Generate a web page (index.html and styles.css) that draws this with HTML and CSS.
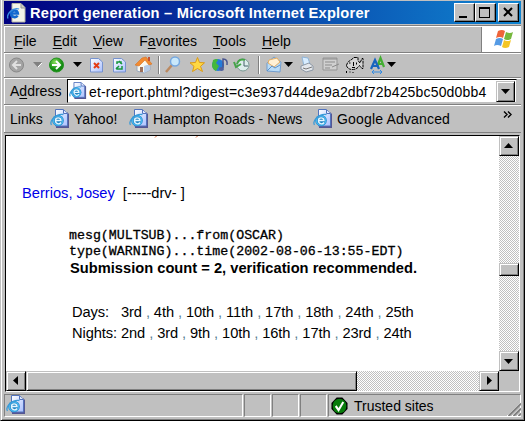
FILE: index.html
```html
<!DOCTYPE html>
<html lang="en">
<head>
<meta charset="utf-8">
<title>Report generation</title>
<link rel="stylesheet" href="styles.css">
</head>
<body>
<svg class="defs" width="0" height="0">
  <defs>
    <linearGradient id="paper" x1="0" y1="0" x2="1" y2="1"><stop offset="0" stop-color="#fff"/><stop offset="1" stop-color="#a9bfff"/></linearGradient>
    <radialGradient id="green" cx=".4" cy=".3"><stop offset="0" stop-color="#8be05b"/><stop offset="1" stop-color="#138b12"/></radialGradient>
    <symbol id="page" viewBox="0 0 20 20">
      <path d="M6 3h11l2 2v14H6z" fill="#555693"/>
      <path d="M5.500 .5h8l4 4v12.500h-12z" fill="url(#paper)" stroke="#5273bd"/>
      <path d="M13.500 1v3.500h4" fill="#e3ebff" stroke="#5273bd"/>
      <circle cx="8" cy="11.500" r="5.800" fill="#2384c4"/>
      <circle cx="8" cy="11.500" r="4.600" fill="none" stroke="#45b4ee" stroke-width="1.500"/>
      <path d="M11 13.500c-1.500 2.300-5.500 1.500-5.500-2 0-3.500 5.200-3.500 5.500 0H6" fill="none" stroke="#e4f6ff" stroke-width="1.400"/>
      <path d="M1.500 16C-1 12 6 4 13.500 5.500" fill="none" stroke="#3b9bd8" stroke-width="1.300"/>
    </symbol>
  </defs>
</svg>
<div class="window">
  <header class="title">
    <svg class="title-icon" viewBox="0 0 19 20"><path d="M5 .5h9l4 4V19H5z" fill="#f3f3e8" stroke="#b5b5a5"/><path d="M14 1v4h4" fill="#d0d0c0" stroke="#999"/><path d="M10.500 12.500c-1.200 2.500-6.500 2-6.500-2s6.500-4 6.800 0H5" fill="none" stroke="#1268cf" stroke-width="2.700"/><path d="M1 15.500C-1 11 6 4 12 6" fill="none" stroke="#398ee0" stroke-width="1.300"/></svg>
    <span class="title-text">Report generation – Microsoft Internet Explorer</span>
    <span class="win-buttons">
      <span class="btn win"><svg width="18" height="15"><path d="M3 11h8v2H3z"/></svg></span>
      <span class="btn win"><svg width="18" height="15"><path d="M2 2h11v11H2zM3 4v8h9V4z" fill-rule="evenodd"/></svg></span>
      <span class="btn win close"><svg width="18" height="15"><path d="M4 3l8 8M12 3l-8 8" stroke="#000" stroke-width="2"/></svg></span>
    </span>
  </header>
  <nav class="menubar">
    <div class="menus"><span><u>F</u>ile</span><span><u>E</u>dit</span><span><u>V</u>iew</span><span>F<u>a</u>vorites</span><span><u>T</u>ools</span><span><u>H</u>elp</span></div>
    <div class="brand"><svg width="22" height="20" viewBox="0 0 22 20"><path d="M5 2q4-2 7 0L10 9q-3-2-7 0z" fill="#ee6439"/><path d="M13 3q4 2 7 0l-2 7q-4 2-7 0z" fill="#76b83d"/><path d="M3 10q4-2 7 0l-2 7q-4-2-7 0z" fill="#559be5"/><path d="M11 11q3 2 7 0l-2 7q-4 2-7 0z" fill="#f4c525"/></svg></div>
  </nav>
  <div class="toolbar">
    <svg width="500" height="23" viewBox="0 0 500 23">
      <circle cx="12.500" cy="12" r="7" fill="#a4a4a4" stroke="#888"/><path d="M17 12H9m4-4l-4 4 4 4" fill="none" stroke="#e0e0e0" stroke-width="2"/>
      <path d="M29 9h9l-4.500 5z" fill="#808080"/><path d="M34 14l4-4" stroke="#fff"/>
      <circle cx="52.500" cy="12" r="7" fill="url(#green)" stroke="#249321"/><path d="M48 12h8m-4-4l4 4-4 4" fill="none" stroke="#fff" stroke-width="2"/>
      <path d="M69 9h9l-4.500 5z"/>
      <path d="M86.500 5.500h8l4 3.500v10h-12z" fill="url(#paper)" stroke="#7793ce"/><path d="M90 10l5 5m0-5l-5 5" stroke="#e43b14" stroke-width="2"/>
      <path d="M109.500 5.500h8l4 3.500v10h-12z" fill="url(#paper)" stroke="#7793ce"/><path d="M113 11V9h4v2m1 2v3h-5v-2M115 8l3 3M115 13l-3 3" fill="none" stroke="#18973c" stroke-width="1.500"/>
      <path d="M133 12v6l7 2 6-3v-6l-5-5z" fill="#f9f8f1" stroke="#99a8bd"/><path d="M140 13l6-2v6l-6 3z" fill="#b7cce8"/><path d="M131 12l7-7 4-1 6 7-3 1-4-5-6 6z" fill="#f28b31" stroke="#d77221" stroke-width=".6"/><path d="M136 14h3v5h-3z" fill="#9d705b"/><path d="M144 4h2v4h-2z" fill="#c55234"/>
      <path d="M154.500 3v18" stroke="#808080"/><path d="M155.500 3v18" stroke="#fff"/>
      <path d="M168 12l-6 7" stroke="#bb8960" stroke-width="2.500"/><circle cx="171" cy="8.500" r="4.500" fill="#c9e8fa" stroke="#76a8df" stroke-width="1.500"/>
      <path d="M193.500 4.500l2 5 5 .3-4 3.500 2 5.200-5-3-5 3 1.500-5.200-4-3.500 5.500-.3z" fill="#ffd843" stroke="#dc9b17"/>
      <circle cx="214" cy="12" r="6" fill="#247bd8"/><path d="M209 7q4-2 5 0l-2 3 3 3-3 5q-4-2-4-6z" fill="#45b83a"/><path d="M219 15V6q5 0 4 6" fill="none" stroke="#4b568f" stroke-width="1.500"/><ellipse cx="217.500" cy="16" rx="2.500" ry="2" fill="#4f609b"/>
      <circle cx="239" cy="12" r="6" fill="#deefec" stroke="#7b9a94"/><path d="M240 8v5h4" fill="none" stroke="#46626a"/><path d="M241 7q-6-2-8 4m-3-2l2 5 5-3" fill="none" stroke="#45a448" stroke-width="2"/>
      <path d="M254.500 3v18" stroke="#808080"/><path d="M255.500 3v18" stroke="#fff"/>
      <path d="M263 10l7-6 7 5-1 10-13-1z" fill="#b9dcf8" stroke="#719dce"/><path d="M265 7l8-2 3 4-6 5-6-4z" fill="#fff1d5" stroke="#e5ad62"/><path d="M263 18l5-5 3 2 5-3" fill="none" stroke="#5e92c9"/>
      <path d="M280 9h9l-4.500 5z"/>
      <path d="M298 4l6 1 2 6-6 2z" fill="#d8edff" stroke="#90b5d9"/><path d="M297 13l8-3 4 3v4l-7 2-5-3z" fill="#e4e8ed" stroke="#8d98a5"/><path d="M299 15l3 1 6-2" fill="none" stroke="#777"/>
      <path d="M319 5h14v12h-14z" fill="#d0d0d0" stroke="#959595"/><path d="M319 6h14M321 9h10M321 12h7M321 15h5M328 14l7-3" stroke="#8b8b8b"/>
      <path d="M342.500 12.500q1-4 4.500-5.500l3-2.500h4v3l2 2.500 2-4.500h1v10h-1l-2.500-3q-3 4.500-8 4-4-.5-5-4z" fill="#d4d4d4" stroke="#000" stroke-dasharray="3 .7"/><path d="M345 10h1.500M349.500 9v4M352.500 9.500v2M348 14.500h3M342.500 18v2M345.500 19h1M348.500 19.500h1" stroke="#000"/>
      <path d="M373 14l3.500-9 3.500 9m-6-3h5" fill="none" stroke="#43ad31" stroke-width="2.200"/><path d="M367 16l4-9 4 9m-6-3h5" fill="none" stroke="#1764bf" stroke-width="2.200"/><path d="M368 19h10m-8-2l-2 2 2 2m6-4l2 2-2 2" fill="none" stroke="#338ae0"/>
      <path d="M383 9h9l-4.500 5z"/>
    </svg>
  </div>
  <div class="address"><label>A<u>d</u>dress</label><div class="combo"><svg class="page small"><use href="#page"/></svg><span class="url">et-report.phtml?digest=c3e937d44de9a2dbf72b425bc50d0bb4</span><span class="btn drop"><svg width="15" height="17"><path d="M3 6h9l-4.500 5z"/></svg></span></div></div>
  <div class="links"><span class="links-label">Links</span><svg class="page"><use href="#page"/></svg><span class="yahoo">Yahoo!</span><svg class="page"><use href="#page"/></svg><span class="hampton">Hampton Roads - News</span><svg class="page"><use href="#page"/></svg><span class="google">Google Advanced</span><svg class="more" width="9" height="7"><path d="M1 .5l3 3-3 3M5 .5l3 3-3 3" fill="none" stroke="#000" stroke-width="1.400"/></svg></div>
  <main class="view">
    <section class="document">
      <svg class="cutoff" width="493" height="2"><path d="M149 1.500l1.500-1.500M190 1.500l1.500-1.500" stroke="#d86532"/></svg>
      <p class="person"><a>Berrios, Josey</a><span>[-----drv- ]</span></p>
      <pre class="message">mesg(MULTSUB)...from(OSCAR)
type(WARNING)...time(2002-08-06-13:55-EDT)</pre>
      <p class="count">Submission count = 2, verification recommended.</p>
      <div class="dates">
        <span>Days:</span><span>3rd <i>,</i> 4th <i>,</i> 10th <i>,</i> 11th <i>,</i> 17th <i>,</i> 18th <i>,</i> 24th <i>,</i> 25th</span>
        <span>Nights:</span><span>2nd <i>,</i> 3rd <i>,</i> 9th <i>,</i> 10th <i>,</i> 16th <i>,</i> 17th <i>,</i> 23rd <i>,</i> 24th</span>
      </div>
    </section>
    <div class="vscroll"><span class="btn arrow"><svg width="16" height="16"><path d="M3 10h9L7.500 5z"/></svg></span><span class="btn vthumb"></span><span class="btn arrow down"><svg width="16" height="16"><path d="M3 6h9l-4.500 5z"/></svg></span></div>
    <div class="hscroll"><span class="btn arrow"><svg width="16" height="16"><path d="M10 3v9L5 7.500z"/></svg></span><span class="btn hthumb"></span><span class="btn arrow right"><svg width="16" height="16"><path d="M6 3v9l5-4.500z"/></svg></span></div>
    <div class="corner"></div>
  </main>
  <footer class="status">
    <div class="pane"><svg class="page"><use href="#page"/></svg></div><div class="pane"></div><div class="pane"></div><div class="pane"></div>
    <div class="pane zone"><svg width="17" height="18" viewBox="0 0 18 18" preserveAspectRatio="none"><path d="M6 .5h6L17.500 6v6L12 17.500H6L.5 12V6z"/><circle cx="9" cy="9" r="7.300" fill="#087c0b"/><path d="M5 9l3 4 5-8" fill="none" stroke="#fff" stroke-width="2.200"/></svg><span>Trusted sites</span><svg class="grip" width="15" height="15"><path d="M1 15L15 1M6 15l9-9M11 15l4-4" stroke="#fff"/><path d="M2.500 15L15 2.500M7.500 15L15 7.500M12.500 15l2.500-2.500" stroke="#808080" stroke-width="2"/></svg></div>
  </footer>
</div>
</body>
</html>
```
FILE: styles.css
```css
* { box-sizing: border-box; }
body { margin: 0; overflow: hidden; background: #c0c0c0; color: #000; font: 14px/18px "Liberation Sans", Arial, sans-serif; }
svg { display: block; flex: none; }
.defs { position: absolute; }
.window { width: 525px; height: 421px; display: flex; flex-direction: column; padding: 1px 2px 0 2px; border: solid; border-width: 0 1px 1px; border-color: #c0c0c0 #000 #000 #c0c0c0; box-shadow: inset 1px 0 #fff, inset -1px -1px #808080; }
.window > * { flex: none; margin-left: 1px; white-space: nowrap; }
.title { height: 23px; width: 517px; display: flex; align-items: center; background: linear-gradient(90deg, #000080, #1084d0); color: #fff; padding-left: 3px; }
.title-icon { width: 19px; height: 20px; }
.title-text { font-weight: bold; font-size: 14.67px; margin-left: 4px; letter-spacing: .21px; }
.win-buttons { display: flex; margin: 0 2px 0 auto; }
.btn { display: block; flex: none; background: #c0c0c0; border: 1px solid; border-color: #c0c0c0 #000 #000 #c0c0c0; box-shadow: inset 1px 1px #fff, inset -1px -1px #808080; }
.win { width: 21px; height: 19px; padding: 1px; border-color: #fff #000 #000 #fff; box-shadow: inset -1px -1px #808080; }
.close { margin-left: 2px; }
.menubar { margin-top: 1px; height: 28px; width: 517px; display: flex; border-top: 1px solid #808080; border-bottom: 1px solid #808080; box-shadow: inset 0 1px #fff; }
.menus { flex: 1; display: flex; gap: 16px; padding: 6px 0 0 10px; box-shadow: inset 1px 1px #fff; letter-spacing: .03px; }
u { text-decoration-thickness: 1px; text-underline-offset: 2px; }
.brand { width: 40px; margin-top: 1px; background: #fff; border-left: 1px solid #808080; padding: 2px 0 0 11px; }
.toolbar { height: 25px; width: 517px; border-bottom: 1px solid #808080; box-shadow: inset 1px 1px #fff; }
.address { height: 27px; width: 517px; display: flex; border-bottom: 1px solid #808080; box-shadow: inset 1px 1px #fff; padding: 1px 4px 1px 6px; }
.address label { width: 57px; padding-top: 3px; }
.combo { flex: 1; height: 24px; display: flex; background: #fff; border: 1px solid; border-color: #000 #c0c0c0 #c0c0c0 #000; padding: 1px 1px 0 1px; }
.page { width: 20px; height: 20px; }
.small { width: 18px; height: 18px; margin-top: 1px; }
.url { flex: 1; padding: 2px 0 0 2px; letter-spacing: .17px; }
.drop { width: 19px; height: 21px; padding: 1px; }
.links { height: 28px; width: 517px; display: flex; align-items: center; padding-left: 6px; border-bottom: 1px solid #808080; box-shadow: inset 1px 1px #fff; }
.links-label { width: 40px; }
.links .page { margin-right: 4px; }
.yahoo { width: 55px; }
.hampton { width: 160px; letter-spacing: .04px; }
.google { letter-spacing: .17px; }
.more { margin: -9px 9px 0 auto; }
.view { height: 257px; display: grid; grid-template: 235px 20px / 493px 20px; border: 1px solid; border-color: #000 #fff #fff #000; }
.window > .view { width: 515px; margin: 2px 0 0 2px; }
.document { background: #fff; overflow: hidden; font-size: 14.67px; }
.cutoff { height: 2px; }
.person { margin: 46px 0 0 16px; }
.person a { color: #0000e8; }
.person span { margin-left: 8px; }
.message { margin: 26px 0 0 63px; font: 13.27px/16px "Liberation Mono", monospace; -webkit-text-stroke: .3px #000; }
.count { margin: -1px 0 0 64px; font-weight: bold; line-height: 18px; letter-spacing: .01px; }
.dates { margin: 25px 0 0 66px; display: grid; grid-template-columns: 49px auto; line-height: 21px; letter-spacing: -.09px; }
i { font-style: normal; color: #568092; }
.vscroll, .hscroll { display: flex; background: repeating-conic-gradient(#c0c0c0 0 25%, #fff 0 50%) 0 0 / 2px 2px; }
.vscroll { flex-direction: column; }
.arrow { width: 20px; height: 20px; padding: 1px; }
.vthumb { height: 13px; margin-top: 107px; }
.down { margin: auto 0 0 0; }
.right { margin: 0 0 0 auto; }
.hthumb { width: 331px; }
.corner { background: #c0c0c0; }
.status { margin-top: 2px; height: 23px; width: 517px; display: grid; grid-template-columns: 239px 27px 27px 27px 1fr; column-gap: 1px; }
.pane { border: 1px solid; border-color: #808080 #fff #fff #808080; padding: 0 1px; }
.zone { display: flex; align-items: center; gap: 6px; padding-left: 2px; }
.zone span { padding-top: 1px; }
.grip { margin: 5px -2px 0 auto; }
```
